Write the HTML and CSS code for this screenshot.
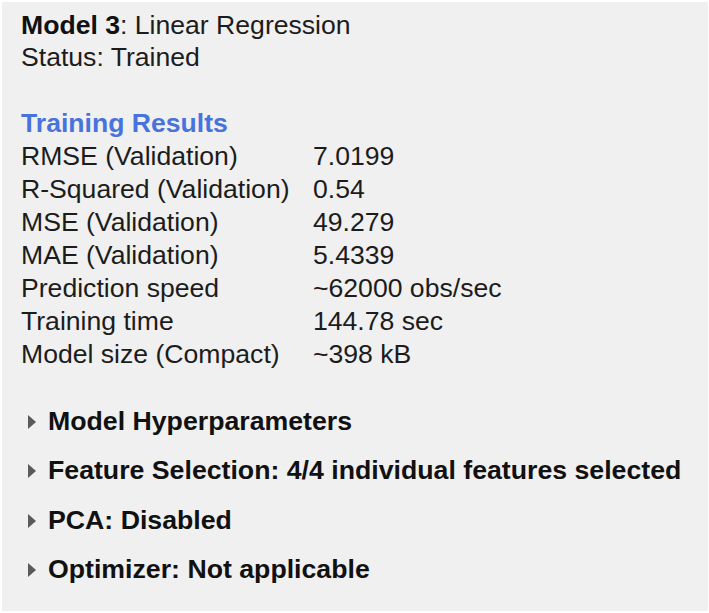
FILE: index.html
```html
<!DOCTYPE html>
<html>
<head>
<meta charset="utf-8">
<link rel="stylesheet" href="styles.css">
</head>
<body>
<div class="panel">
  <div class="header">
    <div class="line"><b>Model 3</b>: Linear Regression</div>
    <div class="line">Status: Trained</div>
  </div>
  <div class="section-title">Training Results</div>
  <div class="results">
    <div class="label">RMSE (Validation)</div><div class="value">7.0199</div>
    <div class="label">R-Squared (Validation)</div><div class="value">0.54</div>
    <div class="label">MSE (Validation)</div><div class="value">49.279</div>
    <div class="label">MAE (Validation)</div><div class="value">5.4339</div>
    <div class="label">Prediction speed</div><div class="value">~62000 obs/sec</div>
    <div class="label">Training time</div><div class="value">144.78 sec</div>
    <div class="label">Model size (Compact)</div><div class="value">~398 kB</div>
  </div>
  <div class="collapsibles">
    <div class="item"><span class="arrow"></span><span class="item-text">Model Hyperparameters</span></div>
    <div class="item"><span class="arrow"></span><span class="item-text">Feature Selection: 4/4 individual features selected</span></div>
    <div class="item"><span class="arrow"></span><span class="item-text">PCA: Disabled</span></div>
    <div class="item"><span class="arrow"></span><span class="item-text">Optimizer: Not applicable</span></div>
  </div>
</div>
</body>
</html>
```
FILE: styles.css
```css
html, body {
  margin: 0;
  padding: 0;
  background: #ffffff;
}
body {
  font-family: "Liberation Sans", Arial, sans-serif;
  color: #1c1c1c;
  font-size: 26.6px;
}
.panel {
  margin: 2px 1px 0 2px;
  height: 609px;
  box-sizing: border-box;
  background: #f0f0f0;
  padding: 7px 0 0 19px;
}
.header .line {
  line-height: 32px;
}
.header b {
  font-weight: bold;
  color: #111;
}
.section-title {
  margin-top: 34px;
  line-height: 33px;
  font-weight: bold;
  color: #4873dd;
}
.results {
  display: grid;
  grid-template-columns: 292px auto;
  grid-auto-rows: 33px;
  line-height: 33px;
}
.collapsibles {
  margin-top: 26px;
}
.item {
  display: flex;
  align-items: center;
  height: 49.3px;
  line-height: 49.3px;
  font-weight: bold;
  font-size: 26.7px;
  color: #111;
}
.arrow {
  width: 0;
  height: 0;
  border-top: 7px solid transparent;
  border-bottom: 7px solid transparent;
  border-left: 8px solid #5a5a5a;
  margin-left: 7px;
  margin-right: 12px;
  margin-top: 1px;
}
.item-text {
  white-space: nowrap;
}
```
